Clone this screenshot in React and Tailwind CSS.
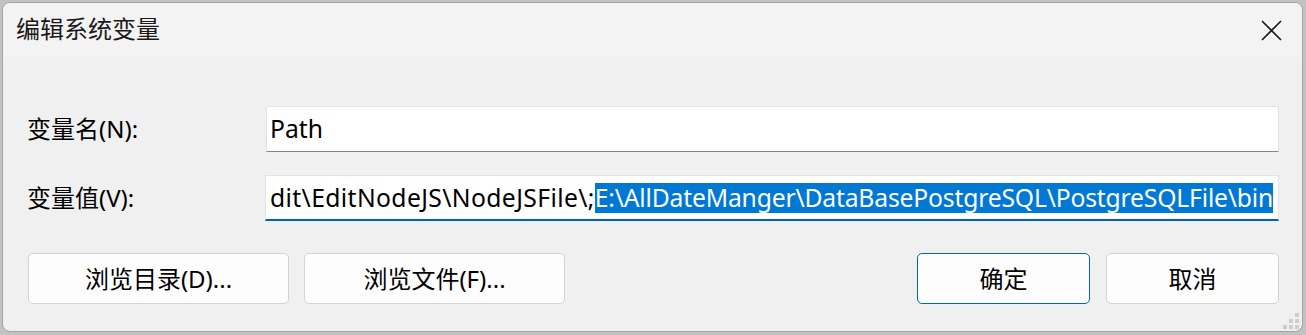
import React from 'react';

const FONT = { fontFamily: "'Noto Sans', 'Noto Sans CJK SC', sans-serif" };

function CloseIcon() {
  return (
    <svg width="21" height="21" viewBox="0 0 21 21" fill="none">
      <path d="M1 1 L20 20 M20 1 L1 20" stroke="#1a1a1a" strokeWidth="1.6" />
    </svg>
  );
}

function Grip() {
  const dots = [
    [12, 0],
    [6, 6], [12, 6],
    [0, 12], [6, 12], [12, 12],
  ];
  return (
    <svg width="16" height="16" viewBox="0 0 16 16">
      {dots.map(([x, y], i) => (
        <rect key={i} x={x} y={y} width="4" height="4" fill="#cdcdcd" />
      ))}
    </svg>
  );
}

function Button({ children, primary, className }) {
  return (
    <button
      type="button"
      className={
        'h-[51px] rounded-[5px] bg-[#fdfdfd] text-[24px] text-black flex items-center justify-center ' +
        (primary ? 'border border-[#0067c0] ' : 'border border-[#d3d3d3] ') +
        className
      }
    >
      {children}
    </button>
  );
}

export default function App() {
  return (
    <div className="w-[1306px] h-[335px] bg-[#c2c2c2] pt-[2px] pl-[2px] overflow-hidden" style={FONT}>
      <div className="relative w-[1301px] h-[330px] rounded-[8px] border border-[#a3a3a3] bg-[#f0f0f0] overflow-hidden flex flex-col">
        {/* title bar */}
        <div className="h-[54px] bg-[#f3f3f3] flex items-center justify-between pl-[13px] pr-[20px]">
          <span className="text-[24px] leading-none text-[#1a1a1a] -mt-[2px]">编辑系统变量</span>
          <CloseIcon />
        </div>

        {/* fields */}
        <div className="pl-[24px] pr-[23px] pt-[49px] flex flex-col gap-[23px]">
          <div className="flex items-center">
            <label className="w-[239px] text-[24px] text-black">变量名(N):</label>
            <div className="flex-1 h-[46px] bg-white border border-[#e3e3e3] border-b-[#868686] flex items-center pl-[3px] text-[24.7px] text-black">
              Path
            </div>
          </div>
          <div className="flex items-center">
            <label className="w-[238px] text-[24px] text-black">变量值(V):</label>
            <div className="flex-1 h-[46px] bg-white border border-[#e3e3e3] border-b-2 border-b-[#005fb8] flex items-center pl-[4px] text-[24.7px] text-black whitespace-nowrap overflow-hidden">
              <span className="tracking-[0.38px]">dit\EditNodeJS\NodeJSFile\;</span>
              <span className="bg-[#0078d4] text-white leading-[30px] tracking-[-0.18px]">E:\AllDateManger\DataBasePostgreSQL\PostgreSQLFile\bin</span>
            </div>
          </div>
        </div>

        {/* buttons */}
        <div className="pl-[25px] pr-[23px] pt-[32px] flex items-center">
          <Button className="w-[261px]">浏览目录(D)...</Button>
          <Button className="w-[261px] ml-[15px]">浏览文件(F)...</Button>
          <div className="flex-1" />
          <Button primary className="w-[173px]">确定</Button>
          <Button className="w-[173px] ml-[16px]">取消</Button>
        </div>

        <div className="absolute right-[3px] bottom-[2px]">
          <Grip />
        </div>
      </div>
    </div>
  );
}
